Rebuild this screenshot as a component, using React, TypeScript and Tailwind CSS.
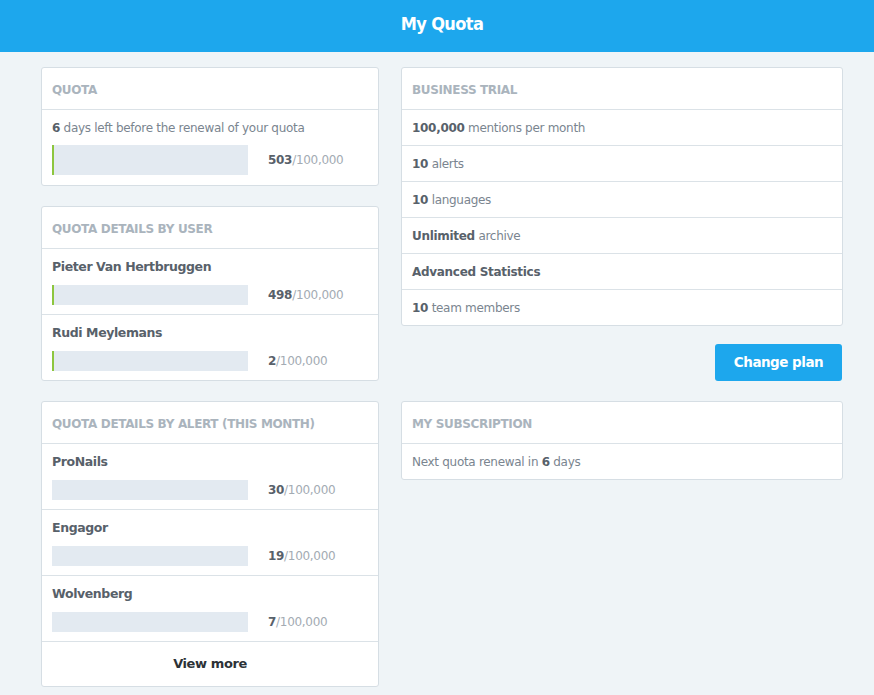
import React from "react";

const font = { fontFamily: '"DejaVu Sans", Verdana, sans-serif' };

function Bar({ h, value, green }: { h: number; value: string; green?: boolean }) {
  return (
    <div className="flex items-center">
      <div className={`w-[196px] bg-[#e3eaf1] ${h === 30 ? "h-[30px]" : "h-[20px]"} ${green ? "border-l-2 border-[#8dc63f]" : ""}`} />
      <div className="ml-[20px] text-[12px] tracking-[-0.3px]">
        <span className="font-bold text-[#58616a]">{value}</span>
        <span className="text-[#a3abb3]">/100,000</span>
      </div>
    </div>
  );
}

function CardHeader({ title }: { title: string }) {
  return (
    <div className="h-[42px] flex items-center px-[10px] pt-[2px] border-b border-[#dbe2e7] text-[12px] font-bold text-[#aab4bd] tracking-[-0.35px]">
      {title}
    </div>
  );
}

function UserRow({ name, value, green, last }: { name: string; value: string; green?: boolean; last?: boolean }) {
  return (
    <div className={`px-[10px] pt-[10px] ${last ? "h-[65px]" : "h-[66px] border-b border-[#dbe2e7]"}`}>
      <div className="text-[12.5px] font-bold text-[#58616a] leading-[16px] tracking-[-0.4px]">{name}</div>
      <div className="mt-[10px]">
        <Bar h={20} value={value} green={green} />
      </div>
    </div>
  );
}

function FeatureRow({ bold, rest, last }: { bold: string; rest: string; last?: boolean }) {
  return (
    <div className={`flex items-center px-[10px] text-[12px] tracking-[-0.3px] ${last ? "h-[35px]" : "h-[36px] border-b border-[#dbe2e7]"}`}>
      <span className="font-bold text-[#58616a]">{bold}</span>
      {rest && <span className="text-[#7a858f]">&nbsp;{rest}</span>}
    </div>
  );
}

export default function App() {
  return (
    <div className="min-h-[695px] bg-[#eff4f7]" style={font}>
      <div className="h-[52px] bg-[#1da7ed] flex items-center justify-center pb-[6px]">
        <span className="text-white text-[18px] font-bold tracking-[-0.6px] pl-[10px]" style={{ fontFamily: '"DejaVu Sans Condensed", "Liberation Sans Narrow", sans-serif' }}>
          My Quota
        </span>
      </div>
      <div className="flex pl-[41px] pt-[15px] gap-[22px]">
        <div className="w-[338px] flex flex-col gap-[20px]">
          <div className="bg-white border border-[#d6dee4] rounded-[3px]">
            <CardHeader title="QUOTA" />
            <div className="px-[10px] pt-[10px] pb-[10px]">
              <div className="text-[12px] text-[#7a858f] leading-[16px] tracking-[-0.3px]">
                <span className="font-bold text-[#58616a]">6</span> days left before the renewal of your quota
              </div>
              <div className="mt-[9px]">
                <Bar h={30} value="503" green />
              </div>
            </div>
          </div>
          <div className="bg-white border border-[#d6dee4] rounded-[3px]">
            <CardHeader title="QUOTA DETAILS BY USER" />
            <UserRow name="Pieter Van Hertbruggen" value="498" green />
            <UserRow name="Rudi Meylemans" value="2" green last />
          </div>
          <div className="bg-white border border-[#d6dee4] rounded-[3px]">
            <CardHeader title="QUOTA DETAILS BY ALERT (THIS MONTH)" />
            <UserRow name="ProNails" value="30" />
            <UserRow name="Engagor" value="19" />
            <UserRow name="Wolvenberg" value="7" />
            <div className="h-[44px] flex items-center justify-center text-[13px] font-bold text-[#2c3237] tracking-[-0.4px]">
              View more
            </div>
          </div>
        </div>
        <div className="w-[442px] flex flex-col">
          <div className="bg-white border border-[#d6dee4] rounded-[3px]">
            <CardHeader title="BUSINESS TRIAL" />
            <FeatureRow bold="100,000" rest="mentions per month" />
            <FeatureRow bold="10" rest="alerts" />
            <FeatureRow bold="10" rest="languages" />
            <FeatureRow bold="Unlimited" rest="archive" />
            <FeatureRow bold="Advanced Statistics" rest="" />
            <FeatureRow bold="10" rest="team members" last />
          </div>
          <div className="flex justify-end pr-[1px] mt-[18px]">
            <button className="w-[127px] h-[37px] bg-[#1da7ed] rounded-[3px] text-white text-[13.5px] font-bold tracking-[-0.5px]">
              Change plan
            </button>
          </div>
          <div className="mt-[20px] bg-white border border-[#d6dee4] rounded-[3px]">
            <CardHeader title="MY SUBSCRIPTION" />
            <div className="h-[35px] flex items-center px-[10px] text-[12px] text-[#7a858f] tracking-[-0.3px]">
              Next quota renewal in&nbsp;<span className="font-bold text-[#58616a]">6</span>&nbsp;days
            </div>
          </div>
        </div>
      </div>
    </div>
  );
}
